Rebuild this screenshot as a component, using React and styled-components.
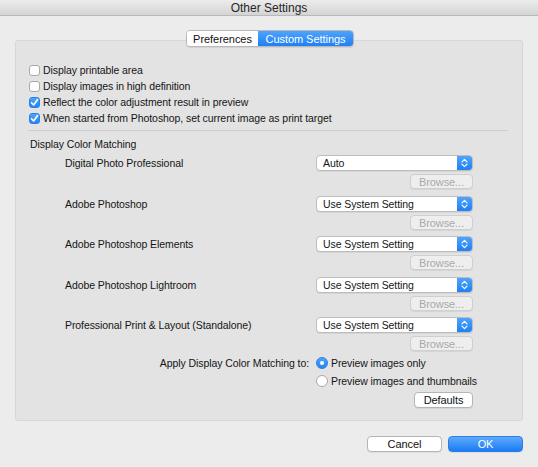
import React from "react";
import styled, { createGlobalStyle } from "styled-components";

const Global = createGlobalStyle`
  html, body { margin: 0; padding: 0; background: #ececec; }
  body { font-family: "Liberation Sans", Arial, sans-serif; font-size: 10.5px; letter-spacing: -0.08px; color: #151515; }
  * { box-sizing: border-box; }
`;

const Window = styled.div`
  width: 538px;
  height: 467px;
  background: #ececec;
  display: flex;
  flex-direction: column;
  overflow: hidden;
`;

const TitleBar = styled.div`
  height: 16px;
  flex: none;
  display: flex;
  align-items: center;
  justify-content: center;
  background: linear-gradient(#ececec, #d4d4d4);
  border-bottom: 1px solid #b9b9b9;
  font-size: 12px;
  letter-spacing: 0;
  color: #262626;
`;

const Body = styled.div`
  flex: 1;
  display: flex;
  flex-direction: column;
  padding: 14px 15px 0 15px;
`;

const TabRow = styled.div`
  display: flex;
  justify-content: center;
  margin-bottom: -7px;
  position: relative;
  z-index: 1;
  padding-left: 2px;
`;

const Segmented = styled.div`
  display: flex;
  height: 17px;
  border: 1px solid #b9b9b9;
  border-radius: 4px;
  overflow: hidden;
  box-shadow: 0 1px 1px rgba(0,0,0,0.08);
`;

const Segment = styled.div`
  display: flex;
  align-items: center;
  justify-content: center;
  width: ${p => p.$w}px;
  font-size: 11px;
  letter-spacing: -0.05px;
  color: ${p => (p.$active ? "#fff" : "#111")};
  background: ${p => (p.$active ? "linear-gradient(#4ea3fb, #1f80f5)" : "#ffffff")};
`;

const Panel = styled.div`
  height: 381px;
  background: #e3e3e3;
  border: 1px solid #d7d7d7;
  border-radius: 3px;
  padding: 21px 14px 0 12px;
  display: flex;
  flex-direction: column;
`;

const CheckRow = styled.label`
  display: flex;
  align-items: center;
  height: 16px;
  gap: 3px;
  padding-left: 1px;
`;

const Box = styled.span`
  width: 11px;
  height: 11px;
  border-radius: 3px;
  flex: none;
  display: flex;
  align-items: center;
  justify-content: center;
  background: ${p => (p.$on ? "linear-gradient(#4fa4fb, #2584f6)" : "#fff")};
  border: 1px solid ${p => (p.$on ? "#2b7fe6" : "#a9a9a9")};
`;

const Separator = styled.div`
  height: 1px;
  background: #cdcdcd;
  margin: 4px 0 0 0;
`;

const SectionTitle = styled.div`
  height: 14px;
  line-height: 14px;
  margin-top: 6px;
  padding-left: 2px;
`;

const Grid = styled.div`
  display: grid;
  grid-template-columns: 251px 157px;
  margin-left: 37px;
  margin-top: 4px;
`;

const Group = styled.div`
  display: contents;
`;

const Label = styled.div`
  height: 16px;
  display: flex;
  align-items: center;
  justify-content: ${p => (p.$right ? "flex-end" : "flex-start")};
  padding-right: ${p => (p.$right ? "7px" : "0")};
  margin-top: ${p => p.$mt || 0}px;
`;

const Select = styled.div`
  height: 16px;
  display: flex;
  align-items: stretch;
  background: #fff;
  border: 1px solid #bdbdbd;
  border-radius: 4px;
  overflow: hidden;
  margin-top: ${p => p.$mt || 0}px;
  box-shadow: 0 1px 0 rgba(0,0,0,0.06);
`;

const SelectText = styled.div`
  flex: 1;
  display: flex;
  align-items: center;
  padding-left: 6px;
`;

const SelectArrow = styled.div`
  width: 15px;
  display: flex;
  align-items: center;
  justify-content: center;
  background: linear-gradient(#4fa4fb, #1f80f5);
`;

const Button = styled.div`
  height: ${p => p.$h || 16}px;
  width: ${p => p.$w}px;
  justify-self: end;
  display: flex;
  align-items: center;
  justify-content: center;
  border-radius: 4px;
  margin-top: ${p => p.$mt || 0}px;
  font-size: 11px;
  color: ${p => (p.$disabled ? "#a9a9a9" : p.$primary ? "#fff" : "#111")};
  background: ${p =>
    p.$primary ? "linear-gradient(#5eaafc, #1b7cf4)" : p.$disabled ? "#eeeeee" : "#fff"};
  border: 1px solid ${p => (p.$primary ? "#2b7de8" : p.$disabled ? "#cfcfcf" : "#b5b5b5")};
  box-shadow: 0 1px 0 rgba(0,0,0,0.06);
`;

const Empty = styled.div``;

const RadioRow = styled.label`
  height: 16px;
  display: flex;
  align-items: center;
  gap: 3px;
  white-space: nowrap;
  margin-top: ${p => p.$mt || 0}px;
`;

const Radio = styled.span`
  width: 12px;
  height: 12px;
  border-radius: 50%;
  flex: none;
  display: flex;
  align-items: center;
  justify-content: center;
  background: ${p => (p.$on ? "linear-gradient(#4fa4fb, #2584f6)" : "#fff")};
  border: 1px solid ${p => (p.$on ? "#2b7fe6" : "#a9a9a9")};
`;

const Dot = styled.span`
  width: 4px;
  height: 4px;
  border-radius: 50%;
  background: #fff;
`;

const Footer = styled.div`
  display: flex;
  justify-content: flex-end;
  gap: 6px;
  margin-top: 15px;
`;

const Check = () => (
  <svg width="9" height="9" viewBox="0 0 9 9">
    <path d="M1.5 4.8 L3.6 7 L7.6 1.6" fill="none" stroke="#fff" strokeWidth="1.6" strokeLinecap="round" strokeLinejoin="round" />
  </svg>
);

const Updown = () => (
  <svg width="7" height="10" viewBox="0 0 7 10">
    <path d="M1 3.8 L3.5 1.3 L6 3.8 M1 6.2 L3.5 8.7 L6 6.2" fill="none" stroke="#fff" strokeWidth="1.2" strokeLinecap="round" strokeLinejoin="round" />
  </svg>
);

const checks = [
  ["Display printable area", false],
  ["Display images in high definition", false],
  ["Reflect the color adjustment result in preview", true],
  ["When started from Photoshop, set current image as print target", true],
];

const apps = [
  ["Digital Photo Professional", "Auto"],
  ["Adobe Photoshop", "Use System Setting"],
  ["Adobe Photoshop Elements", "Use System Setting"],
  ["Adobe Photoshop Lightroom", "Use System Setting"],
  ["Professional Print & Layout (Standalone)", "Use System Setting"],
];

const gaps = [0, 7, 6, 7, 6];

export default function App() {
  return (
    <Window>
      <Global />
      <TitleBar>Other Settings</TitleBar>
      <Body>
        <TabRow>
          <Segmented>
            <Segment $w={71}>Preferences</Segment>
            <Segment $w={95} $active>Custom Settings</Segment>
          </Segmented>
        </TabRow>
        <Panel>
          {checks.map(([t, on]) => (
            <CheckRow key={t}>
              <Box $on={on}>{on && <Check />}</Box>
              {t}
            </CheckRow>
          ))}
          <Separator />
          <SectionTitle>Display Color Matching</SectionTitle>
          <Grid>
            {apps.map(([name, val], i) => (
              <Group key={name}>
                <Label $mt={gaps[i]}>{name}</Label>
                <Select $mt={gaps[i]}>
                  <SelectText>{val}</SelectText>
                  <SelectArrow><Updown /></SelectArrow>
                </Select>
                <Empty />
                <Button $w={63} $h={15} $mt={3} $disabled>Browse...</Button>
              </Group>
            ))}
            <Label $right $mt={4}>Apply Display Color Matching to:</Label>
            <RadioRow $mt={4}>
              <Radio $on><Dot /></Radio>
              Preview images only
            </RadioRow>
            <Empty />
            <RadioRow $mt={2}>
              <Radio />
              Preview images and thumbnails
            </RadioRow>
            <Empty />
            <Button $w={59} $mt={3}>Defaults</Button>
          </Grid>
        </Panel>
        <Footer>
          <Button $w={75}>Cancel</Button>
          <Button $w={75} $primary>OK</Button>
        </Footer>
      </Body>
    </Window>
  );
}
